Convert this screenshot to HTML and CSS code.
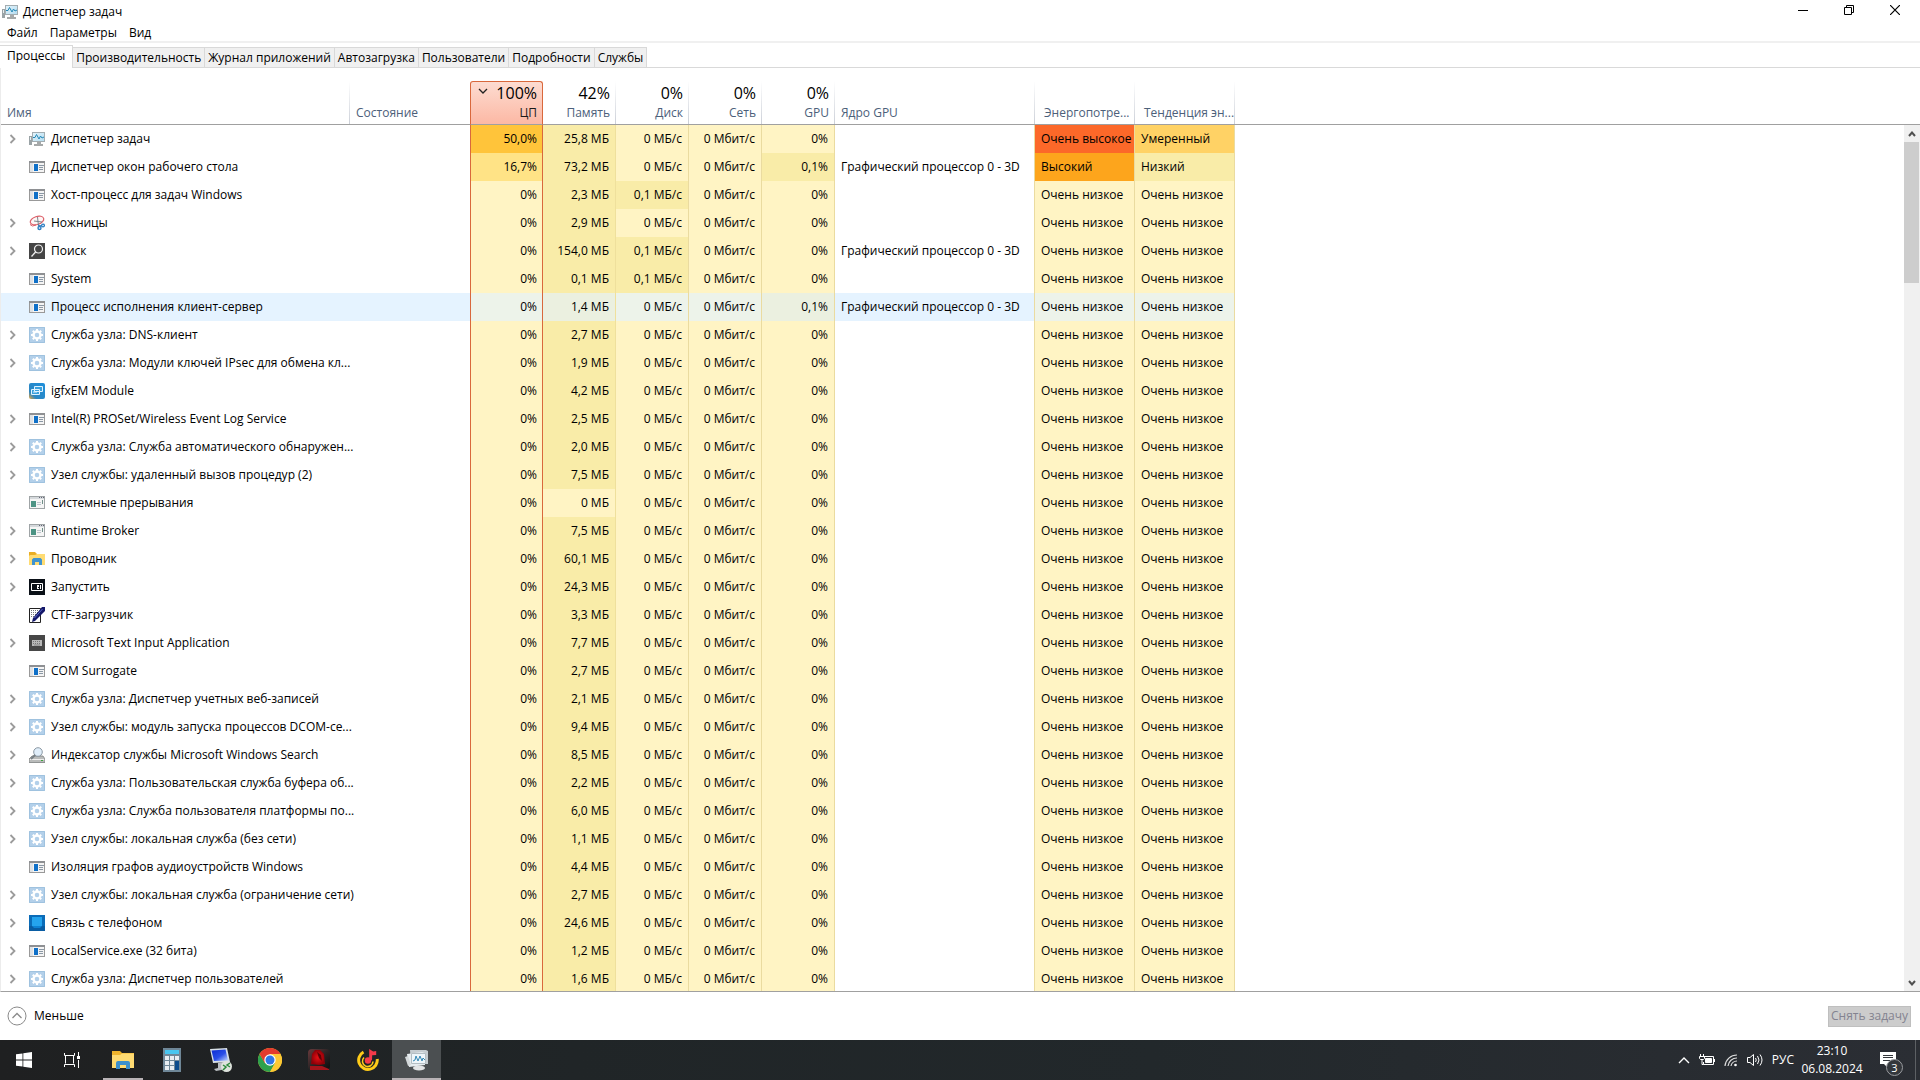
FILE: index.html
```html
<!DOCTYPE html>
<html lang="ru">
<head>
<meta charset="utf-8">
<title>Диспетчер задач</title>
<meta name="viewport" content="width=device-width, initial-scale=1">
<link rel="stylesheet" href="styles.css">
</head>
<body>
<svg class="sprite" aria-hidden="true">
  <defs>
    <linearGradient id="g-screen" x1="0" y1="0" x2="1" y2="1"><stop offset="0" stop-color="#e4f4fb"/><stop offset="1" stop-color="#b4dcf0"/></linearGradient>
    <linearGradient id="g-blue" x1="0" y1="0" x2="1" y2="1"><stop offset="0" stop-color="#0a2bd0"/><stop offset=".55" stop-color="#2a4fe8"/><stop offset="1" stop-color="#c8dcff"/></linearGradient>
    <linearGradient id="g-igfx" x1="0" y1="1" x2="1" y2="0"><stop offset="0" stop-color="#e8a640"/><stop offset=".25" stop-color="#2d86c0"/><stop offset="1" stop-color="#1d8fdc"/></linearGradient>
    <linearGradient id="g-frame" x1="0" y1="0" x2="1" y2="1"><stop offset="0" stop-color="#6a3a3c"/><stop offset=".5" stop-color="#2b2425"/><stop offset="1" stop-color="#0c0d0e"/></linearGradient>
    <radialGradient id="g-red"><stop offset="0" stop-color="#e80f14"/><stop offset="1" stop-color="#8e0008"/></radialGradient>
  </defs>
  <symbol id="taskmgr" viewBox="0 0 16 16">
    <path d="M0 5h3v9H0z" fill="#9aa3a6"/><path d="M1 6h1v3H1z" fill="#e9eeee"/>
    <rect x="3.5" y="1.5" width="12" height="9" fill="url(#g-screen)" stroke="#a3adb1"/>
    <path d="M4 6.500h2l1.500-3L10 8l1.500-3L13 7l2-1" fill="none" stroke="#2489b8"/>
    <path d="M8 11h4v2h2v2H5v-2h3z" fill="#a6a9a9"/>
  </symbol>
  <symbol id="app" viewBox="0 0 16 16">
    <rect x=".5" y="2.500" width="15" height="11" fill="#f4f4f4" stroke="#999"/><path d="M0 2h16v2H0z" fill="#8e9093"/>
    <path d="M5 5h4v7H5z" fill="#0f70c8"/><path d="M1 4h3v9H1z" fill="#dfe2e5"/><path d="M10 6.500h5M10 8.500h4M10 10.500h4" stroke="#8b98a5"/>
  </symbol>
  <symbol id="oldapp" viewBox="0 0 16 16">
    <rect x=".5" y="1.500" width="15" height="12" fill="#f5f5f5" stroke="#9fa4a6"/><path d="M1 2h14v2H1z" fill="#d5d9dc"/>
    <path d="M10 2.500h1M12 2.500h1M14 2.500h1" stroke="#667"/><path d="M2 6h5v6H2z" fill="#4c9384"/><path d="M8 7.500h4M8 9.500h4" stroke="#bcc5cc"/><path d="M13 5h1v4h-1z" fill="#6f8f88"/>
  </symbol>
  <symbol id="gear" viewBox="0 0 16 16">
    <path d="M0 0h16v16H0z" fill="#b3d0ea"/><path d="M.5.5h15v15H.5z" fill="none" stroke="#9fc2df"/>
    <circle cx="8" cy="8" r="3.500" fill="none" stroke="#fff" stroke-width="2.400"/>
    <path d="M8 2v2M8 12v2M2 8h2M12 8h2M3.800 3.800 5 5M11 11l1.200 1.200M3.800 12.200 5 11M11 5l1.200-1.200" stroke="#fff" stroke-width="2"/>
  </symbol>
  <symbol id="snip" viewBox="0 0 16 16">
    <ellipse cx="8" cy="5.500" rx="7" ry="4" transform="rotate(-18 8 5.500)" fill="#fdf6f6" stroke="#dc5f68" stroke-width="1.200"/>
    <path d="M8.500 2 9.500 11M5 6l8 1" stroke="#7d878c"/><path d="M1 9.500 3.500 11 7 10" fill="none" stroke="#dc5f68"/>
    <circle cx="10.500" cy="13" r="1.500" fill="none" stroke="#2f7fc2" stroke-width="1.400"/><circle cx="14" cy="10.500" r="1.400" fill="none" stroke="#2f7fc2" stroke-width="1.300"/><path d="m9 10 4 1" stroke="#2f7fc2"/>
  </symbol>
  <symbol id="search" viewBox="0 0 16 16">
    <path d="M0 0h16v16H0z" fill="#454545"/><circle cx="9.500" cy="6" r="4" fill="none" stroke="#f1f1f1" stroke-width="1.200"/><path d="M6.600 9 2.500 13.500" stroke="#f1f1f1" stroke-width="1.300"/>
  </symbol>
  <symbol id="igfx" viewBox="0 0 16 16">
    <rect width="16" height="16" rx="2" fill="url(#g-igfx)"/><path d="M5.500 3.500h8v5h-8zM2.500 6.500h8v5h-8z" fill="#3aa0dc" stroke="#dff2ff"/><path d="M4 9h4" stroke="#dff2ff"/>
  </symbol>
  <symbol id="folder" viewBox="0 0 16 16">
    <path d="M0 1h6l2 2h8v11H0z" fill="#e9ae25"/><path d="M0 5l1-1h5l2-1h8v11H0z" fill="#ffdc73"/>
    <path d="M3 8.500 4.500 7h7L13 8.500V14h-3v-3H6v3H3z" fill="#3f93cf"/>
  </symbol>
  <symbol id="start-app" viewBox="0 0 16 16">
    <path d="M0 0h16v16H0z" fill="#0a1017"/><path d="M2.500 4.500h11v7h-11z" fill="none" stroke="#fff"/><path d="M8 6h4v4H8z" fill="#fff"/><path d="M10.500 6v4M9 8.500h1" stroke="#0a1017"/>
  </symbol>
  <symbol id="ctf" viewBox="0 0 16 16">
    <path d="M.5 1.500h11v14H.5z" fill="#fff" stroke="#222"/><path d="M2 3.500h8M2 5.500h8M2 7.500h6M2 9.500h4" stroke="#777" stroke-dasharray="1 1"/>
    <path d="M16 0v4L6 14l-3 1 1-4L13 0z" fill="#15186a"/><path d="M13.500 2 5.500 11" stroke="#5a68c8"/>
  </symbol>
  <symbol id="keyboard" viewBox="0 0 16 16">
    <path d="M0 0h16v16H0z" fill="#474747"/><path d="M3 5h10v6H3z" fill="#b9b9b9"/><path d="M4 6.500h8M4 8.500h8" stroke="#777" stroke-dasharray="1 1"/><path d="M5 10h6" stroke="#888"/>
  </symbol>
  <symbol id="indexer" viewBox="0 0 16 16">
    <path d="M3 9h11l2 3v3.500H0V12z" fill="#b9bbba" stroke="#7e8281" stroke-width=".8"/><path d="M1 12.500h14" stroke="#eee"/><path d="M12 13.500h2" stroke="#3aa33a"/>
    <circle cx="9" cy="5" r="4.300" fill="#e0eefa" stroke="#8b98a3"/><path d="M6 8 2 12" stroke="#777f85" stroke-width="1.800"/>
  </symbol>
  <symbol id="phone" viewBox="0 0 16 16">
    <path d="M0 0h16v16H0z" fill="#0b6cb8"/><path d="M3 2h10v9H3z" fill="#25a4ee"/><path d="M0 11h16v5H0z" fill="#0a5da3"/><path d="M3 11h10l-2 2H5z" fill="#0d82d4"/>
  </symbol>
  <symbol id="chevron" viewBox="0 0 8 12"><path d="m1.500 2 4 4-4 4" fill="none" stroke="#9b9b9b" stroke-width="1.800"/></symbol>
</svg>

<header>
  <div class="titlebar">
    <svg class="icon"><use href="#taskmgr"/></svg>
    <h1>Диспетчер задач</h1>
    <div class="window-controls">
      <button aria-label="Свернуть"><svg width="10" height="10"><path d="M0 5.500h10" stroke="#000"/></svg></button>
      <button aria-label="Восстановить"><svg width="10" height="10" fill="none" stroke="#000"><path d="M.5 2.500h7v7h-7zM2.500 2V.5h7v7H8"/></svg></button>
      <button aria-label="Закрыть"><svg width="10" height="10"><path d="m0 0 10 10M10 0 0 10" stroke="#000" stroke-width="1.200"/></svg></button>
    </div>
  </div>
  <nav class="menu"><button>Файл</button><button>Параметры</button><button>Вид</button></nav>
  <div class="tabs" role="tablist">
    <button role="tab" class="tab active" aria-selected="true">Процессы</button>
    <button role="tab" class="tab">Производительность</button>
    <button role="tab" class="tab">Журнал приложений</button>
    <button role="tab" class="tab">Автозагрузка</button>
    <button role="tab" class="tab">Пользователи</button>
    <button role="tab" class="tab">Подробности</button>
    <button role="tab" class="tab">Службы</button>
  </div>
</header>

<main class="processes">
  <div class="list">
    <table>
      <colgroup>
        <col class="c-name"><col class="c-state"><col class="c-num"><col class="c-num"><col class="c-num"><col class="c-num"><col class="c-num"><col class="c-core"><col class="c-text"><col class="c-text"><col>
      </colgroup>
      <thead>
        <tr>
          <th class="left">Имя</th>
          <th class="left plain">Состояние</th>
          <th class="sorted"><svg class="sort" width="10" height="6"><path d="m1 1 4 4 4-4" fill="none" stroke="#222" stroke-width="1.300"/></svg><span class="total">100%</span>ЦП</th>
          <th><span class="total">42%</span>Память</th>
          <th><span class="total">0%</span>Диск</th>
          <th><span class="total">0%</span>Сеть</th>
          <th><span class="total">0%</span>GPU</th>
          <th class="left">Ядро GPU</th>
          <th class="left wide">Энергопотре...</th>
          <th class="left wide">Тенденция эн...</th>
          <th class="plain"></th>
        </tr>
      </thead>
      <tbody id="rows"></tbody>
    </table>
  </div>
  <div class="scroll">
    <div class="scroll-head"></div>
    <button aria-label="Вверх"><svg width="8" height="6"><path d="m1 5 3-3.500L7 5" fill="none" stroke="#505050" stroke-width="2"/></svg></button>
    <div class="track"><div class="thumb"></div></div>
    <button aria-label="Вниз"><svg width="8" height="6"><path d="m1 1 3 3.500L7 1" fill="none" stroke="#505050" stroke-width="2"/></svg></button>
  </div>
</main>

<footer class="actions">
  <button class="less"><svg width="20" height="20" fill="none" stroke="#8a8a8a"><circle cx="10" cy="10" r="9"/><path d="m5.500 12 4.500-4.500 4.500 4.500" stroke-width="1.300"/></svg>Меньше</button>
  <button class="end" disabled>Снять задачу</button>
</footer>

<div class="taskbar">
  <button class="sys" aria-label="Пуск"><svg width="16" height="16" fill="#fff"><path d="M0 2.300 6.500 1.400v6.200H0zM7.300 1.300 16 0v7.600H7.300zM0 8.400h6.500v6.200L0 13.700zM7.300 8.400H16V16l-8.700-1.300z"/></svg></button>
  <button class="sys" aria-label="Представление задач"><svg width="16" height="16" fill="none" stroke="#fff"><path d="M.5 1v2.500h10V1M1.500 3.500v8M9.500 3.500v8M.5 15v-2.500h10V15M14.500 0v4M14.500 8v8"/><path d="M13 4h3v3h-3z" fill="#fff" stroke="none"/></svg></button>
  <button class="app open" aria-label="Проводник"><svg width="22" height="20" viewBox="0 0 22 20"><path d="M0 1h8l2 2h12v15H0z" fill="#f0b42c"/><path d="M0 5h8l2-1.500h12V18H0z" fill="#ffdb72"/><path d="M4 13q0-2 2-2h10q2 0 2 2v6h-4v-4H8v4H4z" fill="#3c90cd"/></svg></button>
  <button class="app" aria-label="Калькулятор"><svg width="18" height="24"><path d="M0 0h18v24H0z" fill="#6f8797"/><path d="M2 2h14v4H2z" fill="#48c6ef"/><path d="M2 8h4v4H2zM7 8h4v4H7zM2 13h4v4H2zM7 13h4v4H7zM2 18h4v4H2zM7 18h4v4H7zM12 8h4v4h-4z" fill="#e8edf1"/><path d="M12 13h4v9h-4z" fill="#0c4c8c"/></svg></button>
  <button class="app" aria-label="Удаленный рабочий стол"><svg width="24" height="24"><path d="m1 1 17-1 3 14-17 1z" fill="#d7dfe6"/><path d="m2.500 2.500 14-1 2.500 11-14 .5z" fill="url(#g-blue)"/><path d="m9 15 5-1 1 5 3 2-11 2-2-2 4-1z" fill="#b9bdc1"/><circle cx="17.500" cy="18.500" r="5.500" fill="#dfe3dd"/><path d="m14 17 3 2-3 3M21 15l-3 2 3 2" fill="none" stroke="#2b8a3b" stroke-width="1.500"/></svg></button>
  <button class="app" aria-label="Google Chrome"><svg width="24" height="24" viewBox="-12 -12 24 24"><circle r="12" fill="#fcc934"/><path d="M-10.400-6A12 12 0 0 0 0 12L5 3-5 3z" fill="#2da14c"/><path d="M0-6h10.400A12 12 0 0 1 0 12L5.200 3z" fill="#fcc934"/><path d="M-10.400-6A12 12 0 0 1 10.400-6H0L-5.200 3z" fill="#e33b2e"/><circle r="5.700" fill="#fff"/><circle r="4.500" fill="#2f76e6"/></svg></button>
  <button class="app" aria-label="Игра"><svg width="22" height="22"><rect width="22" height="21" rx="4" fill="url(#g-frame)"/><path d="m4 5 3-4h5l4 4 1 10-6 1-8-1z" fill="url(#g-red)"/><path d="m9 3 4 3 1 6-3-3z" fill="#5c0206"/><path d="M2 17h12l7 3v1H2z" fill="#a5141b"/></svg></button>
  <button class="app" aria-label="Музыка"><svg width="22" height="22" fill="none"><path d="M6.500 3A9.300 9.300 0 1 0 20.200 10" stroke="#ffcc18" stroke-width="3"/><path d="M7 8.500a5.300 5.300 0 1 0 9 4" stroke="#ffcc18" stroke-width="1.600"/><circle cx="11" cy="11.500" r="3.200" fill="#f43a4a"/><path d="M12.200 11V0l4 2.500 3-.5v4l-4 .2-.2 5z" fill="#f43a4a"/></svg></button>
  <button class="app current" aria-label="Диспетчер задач"><svg width="24" height="22"><path d="M5 1h16l2 1v13H6z" fill="#c5ccd0"/><path d="m2 5 15-2 3 1v12L4 18z" fill="#e6ecef"/><path d="M6.500 4.500h14v10h-14z" fill="#eef6fa" stroke="#b4bec3"/><path d="m8 12 2-1 1-4 2 5 2-5 2 5 1-3 2 2" fill="none" stroke="#3588b4"/><path d="m0 8 3-1 3 9-3 1z" fill="#d3d8da"/><ellipse cx="14" cy="19" rx="6" ry="2.500" fill="#e2e4e5"/></svg></button>
  <div class="tray">
    <button aria-label="Скрытые значки"><svg width="12" height="8"><path d="m1 7 5-5 5 5" fill="none" stroke="#fff" stroke-width="1.400"/></svg></button>
    <button aria-label="Питание"><svg width="16" height="12" fill="none" stroke="#fff"><path d="M5 2.500h9.500v8H4.500V8"/><path d="M6.500 4.500h6v4h-6z" fill="#fff"/><path d="M15.500 5v3M1.500 0v2M4.500 0v2M.5 2.500h5v2l-1 1h-3l-1-1zM3 6v4.500h1.500"/></svg></button>
    <button aria-label="Сеть"><svg width="14" height="14" fill="none" stroke="#ddd" stroke-width="1.200"><path d="M1 13A12 12 0 0 1 13 2M4 13a9 9 0 0 1 9-8M7 13a6 6 0 0 1 6-5"/><circle cx="11.500" cy="12" r="1.300" fill="#fff" stroke="none"/></svg></button>
    <button aria-label="Громкость"><svg width="16" height="14" fill="none" stroke="#fff"><path d="M.5 4.500H3L6.500 1.500v11L3 9.500H.5zM8.500 5q1.500 2 0 4M10.500 3q3 4 0 8M13 1.500q4 5.500 0 11"/></svg></button>
    <button class="lang">РУС</button>
    <button class="clock"><span>23:10</span><span>06.08.2024</span></button>
    <button class="notify" aria-label="Уведомления"><svg width="16" height="16"><path d="M0 0h16v12H8v4l-4-4H0z" fill="#fff"/><path d="M3 3.500h10M3 5.500h10M3 8.500h7" stroke="#34373c"/></svg><span class="badge">3</span></button>
    <button class="peek" aria-label="Свернуть все окна"></button>
  </div>
</div>
<script src="rows.js"></script>
</body>
</html>
```
FILE: styles.css
```css
* { box-sizing: border-box; }

body {
  margin: 0;
  height: 100vh;
  display: flex;
  flex-direction: column;
  overflow: hidden;
  background: #fff;
  color: #000;
  font: 12px/16px "Open Sans", "Noto Sans", sans-serif;
}

button {
  margin: 0;
  padding: 0;
  border: 0;
  background: none;
  color: inherit;
  font: inherit;
}

svg { display: block; flex: none; }
.sprite { position: absolute; width: 0; height: 0; }
.icon { width: 16px; height: 16px; }

.titlebar { display: flex; align-items: center; height: 24px; padding-left: 2px; gap: 5px; }
h1 { margin: 0; font-size: 12px; font-weight: 400; }
.window-controls { display: flex; margin-left: auto; height: 100%; padding: 0 2px 4px 0; }
.window-controls button { width: 46px; display: flex; align-items: center; justify-content: center; }

.menu { display: flex; height: 19px; padding-left: 7px; gap: 12px; border-bottom: 2px solid #f0f0f0; }

.tabs { display: flex; align-items: flex-end; height: 25px; box-shadow: inset 0 -1px #d9d9d9; }
.tab { height: 21px; padding: 0 3px; border: 1px solid #d9d9d9; border-left: 0; background: #f0f0f0; white-space: nowrap; }
.tab.active { height: 23px; padding: 0 7px 2px; border-bottom: 0; background: #fff; }

.processes { flex: 1; min-height: 0; display: flex; padding-top: 13px; border-left: 1px solid #ececec; border-bottom: 1px solid #a0a0a0; }
.list { flex: 1; min-width: 0; overflow: hidden; }

table { width: 100%; table-layout: fixed; border-collapse: separate; border-spacing: 0; white-space: nowrap; }
.c-name { width: 349px; }
.c-state { width: 120px; }
.c-num { width: 73px; }
.c-core { width: 200px; }
.c-text { width: 100px; }

th {
  height: 44px;
  padding: 0 6px 3px;
  border-bottom: 1px solid #a0a0a0;
  background: linear-gradient(#fff, #ccd0d8) right / 1px 100% no-repeat;
  color: #4c607a;
  font-weight: 400;
  text-align: right;
  vertical-align: bottom;
}
th.plain { background: none; }
th.wide { padding-left: 9px; padding-right: 0; }
.total { display: block; margin-bottom: 2px; color: #000; font-size: 16px; line-height: 20px; }
th.sorted {
  position: relative;
  padding-right: 5px;
  border: 1px solid #d9683c;
  border-bottom-color: #a0a0a0;
  border-radius: 3px 3px 0 0;
  background: linear-gradient(#fddcd1, #fcb8a4);
  color: #1a1a1a;
}
.sort { position: absolute; top: 6px; left: 7px; }

td { height: 28px; padding: 0 6px; text-align: right; }
.left { text-align: left; }
td.name { padding: 0 0 0 8px; }
.name-box { display: flex; align-items: center; gap: 6px; }
.expander { flex: none; width: 14px; height: 16px; display: flex; align-items: center; }
.expander svg { width: 8px; height: 12px; }

.heat { border-right: 1px solid #eadba0; background: #fff4c4; }
.heat.mild { background: #f9eca8; }
.heat.cpu { padding-right: 5px; border-right-color: #d9683c; border-left: 1px solid #d9683c; }
.heat.mem { border-right-color: #efe09c; }
.heat.warm { background: #ffe386; }
.heat.amber { background: #ffd265; }
.heat.gold { background: #ffc43a; }
.heat.orange { background: #fda51c; }
.heat.red { background: #fc6829; }
.core { border-right: 1px solid #eadba0; }
.hover td { background: #e5f3ff; }
.hover td.heat { background: #edf3ea; }
.hover td.heat.mild { background: #ebf0e0; }
.hover td:last-child { background: none; }

.scroll { width: 16px; display: flex; flex-direction: column; background: #f0f0f0; }
.scroll-head { height: 44px; border-bottom: 1px solid #a0a0a0; background: #fff; }
.scroll button { height: 17px; display: flex; align-items: center; justify-content: center; }
.track { flex: 1; padding-right: 1px; }
.thumb { height: 17%; background: #cdcdcd; }

.actions { display: flex; align-items: center; justify-content: space-between; height: 48px; padding: 0 9px 0 7px; }
.less { display: flex; align-items: center; gap: 7px; }
.end { height: 21px; padding: 0 2px; border: 1px solid #bfbfbf; background: #ccc; color: #838390; }

.taskbar { display: flex; height: 40px; background: linear-gradient(90deg, #1f2021, #202527 30%, #22282b 60%, #2b2e34); color: #fff; }
.taskbar button { display: flex; align-items: center; justify-content: center; }
.sys { width: 48px; }
.sys + .app { margin-left: 2px; }
.app { width: 49px; }
.app.open { background: linear-gradient(#b9b3b6, #b9b3b6) bottom / 40px 2px no-repeat; }
.app.current { background: #4b4f51; box-shadow: inset 0 -2px #b9b3b6; }
.tray { display: flex; align-items: center; margin-left: auto; height: 100%; gap: 9px; }
.tray .clock { flex-direction: column; width: 58px; line-height: 18px; }
.notify { position: relative; width: 36px; height: 40px; }
.badge { position: absolute; top: 19px; left: 16px; width: 17px; height: 17px; border: 1px solid #9a9ca0; border-radius: 50%; background: #34373c; font-size: 11px; line-height: 15px; }
.peek { width: 5px; height: 40px; }
.taskbar .peek { border-left: 1px solid #5d6064; }
```
FILE: rows.js
```js
// icon, expandable, name, cpu, memory, disk, gpu, power, trend
const VL = 'Очень низкое';
const processes = [
  ['taskmgr', 1, 'Диспетчер задач', '50,0%', '25,8 МБ', '0', '0%', 'Очень высокое', 'Умеренный'],
  ['app', 0, 'Диспетчер окон рабочего стола', '16,7%', '73,2 МБ', '0', '0,1%', 'Высокий', 'Низкий'],
  ['app', 0, 'Хост-процесс для задач Windows', '0%', '2,3 МБ', '0,1', '0%'],
  ['snip', 1, 'Ножницы', '0%', '2,9 МБ', '0', '0%'],
  ['search', 1, 'Поиск', '0%', '154,0 МБ', '0,1', '0%', VL, VL, true],
  ['app', 0, 'System', '0%', '0,1 МБ', '0,1', '0%'],
  ['app', 0, 'Процесс исполнения клиент-сервер', '0%', '1,4 МБ', '0', '0,1%'],
  ['gear', 1, 'Служба узла: DNS-клиент', '0%', '2,7 МБ', '0', '0%'],
  ['gear', 1, 'Служба узла: Модули ключей IPsec для обмена кл...', '0%', '1,9 МБ', '0', '0%'],
  ['igfx', 0, 'igfxEM Module', '0%', '4,2 МБ', '0', '0%'],
  ['app', 1, 'Intel(R) PROSet/Wireless Event Log Service', '0%', '2,5 МБ', '0', '0%'],
  ['gear', 1, 'Служба узла: Служба автоматического обнаружен...', '0%', '2,0 МБ', '0', '0%'],
  ['gear', 1, 'Узел службы: удаленный вызов процедур (2)', '0%', '7,5 МБ', '0', '0%'],
  ['oldapp', 0, 'Системные прерывания', '0%', '0 МБ', '0', '0%'],
  ['oldapp', 1, 'Runtime Broker', '0%', '7,5 МБ', '0', '0%'],
  ['folder', 1, 'Проводник', '0%', '60,1 МБ', '0', '0%'],
  ['start-app', 1, 'Запустить', '0%', '24,3 МБ', '0', '0%'],
  ['ctf', 0, 'CTF-загрузчик', '0%', '3,3 МБ', '0', '0%'],
  ['keyboard', 1, 'Microsoft Text Input Application', '0%', '7,7 МБ', '0', '0%'],
  ['app', 0, 'COM Surrogate', '0%', '2,7 МБ', '0', '0%'],
  ['gear', 1, 'Служба узла: Диспетчер учетных веб-записей', '0%', '2,1 МБ', '0', '0%'],
  ['gear', 1, 'Узел службы: модуль запуска процессов DCOM-се...', '0%', '9,4 МБ', '0', '0%'],
  ['indexer', 1, 'Индексатор службы Microsoft Windows Search', '0%', '8,5 МБ', '0', '0%'],
  ['gear', 1, 'Служба узла: Пользовательская служба буфера об...', '0%', '2,2 МБ', '0', '0%'],
  ['gear', 1, 'Служба узла: Служба пользователя платформы по...', '0%', '6,0 МБ', '0', '0%'],
  ['gear', 1, 'Узел службы: локальная служба (без сети)', '0%', '1,1 МБ', '0', '0%'],
  ['app', 0, 'Изоляция графов аудиоустройств Windows', '0%', '4,4 МБ', '0', '0%'],
  ['gear', 1, 'Узел службы: локальная служба (ограничение сети)', '0%', '2,7 МБ', '0', '0%'],
  ['phone', 1, 'Связь с телефоном', '0%', '24,6 МБ', '0', '0%'],
  ['app', 1, 'LocalService.exe (32 бита)', '0%', '1,2 МБ', '0', '0%'],
  ['gear', 1, 'Служба узла: Диспетчер пользователей', '0%', '1,6 МБ', '0', '0%']
];
const HOVERED = 6;
const heat = {
  '50,0%': 'gold', '16,7%': 'warm', '0,1%': 'mild', '0,1': 'mild',
  'Очень высокое': 'red', 'Высокий': 'orange', 'Умеренный': 'amber', 'Низкий': 'mild'
};
const level = value => heat[value] || '';

document.getElementById('rows').innerHTML = processes.map(
  ([icon, expandable, name, cpu, mem, disk, gpu, power = VL, trend = VL, onGpu = gpu !== '0%'], i) => `
  <tr class="${i === HOVERED ? 'hover' : ''}">
    <td class="left name"><div class="name-box">
      ${expandable ? '<button class="expander" aria-label="Развернуть"><svg><use href="#chevron"/></svg></button>' : '<span class="expander"></span>'}
      <svg class="icon"><use href="#${icon}"/></svg><span>${name}</span></div></td>
    <td></td>
    <td class="heat cpu ${level(cpu)}">${cpu}</td>
    <td class="heat mem ${mem === '0 МБ' ? '' : 'mild'}">${mem}</td>
    <td class="heat ${level(disk)}">${disk} МБ/с</td>
    <td class="heat">0 Мбит/с</td>
    <td class="heat ${level(gpu)}">${gpu}</td>
    <td class="left core">${onGpu ? 'Графический процессор 0 - 3D' : ''}</td>
    <td class="left heat ${level(power)}">${power}</td>
    <td class="left heat ${level(trend)}">${trend}</td>
    <td></td>
  </tr>`).join('');
```
